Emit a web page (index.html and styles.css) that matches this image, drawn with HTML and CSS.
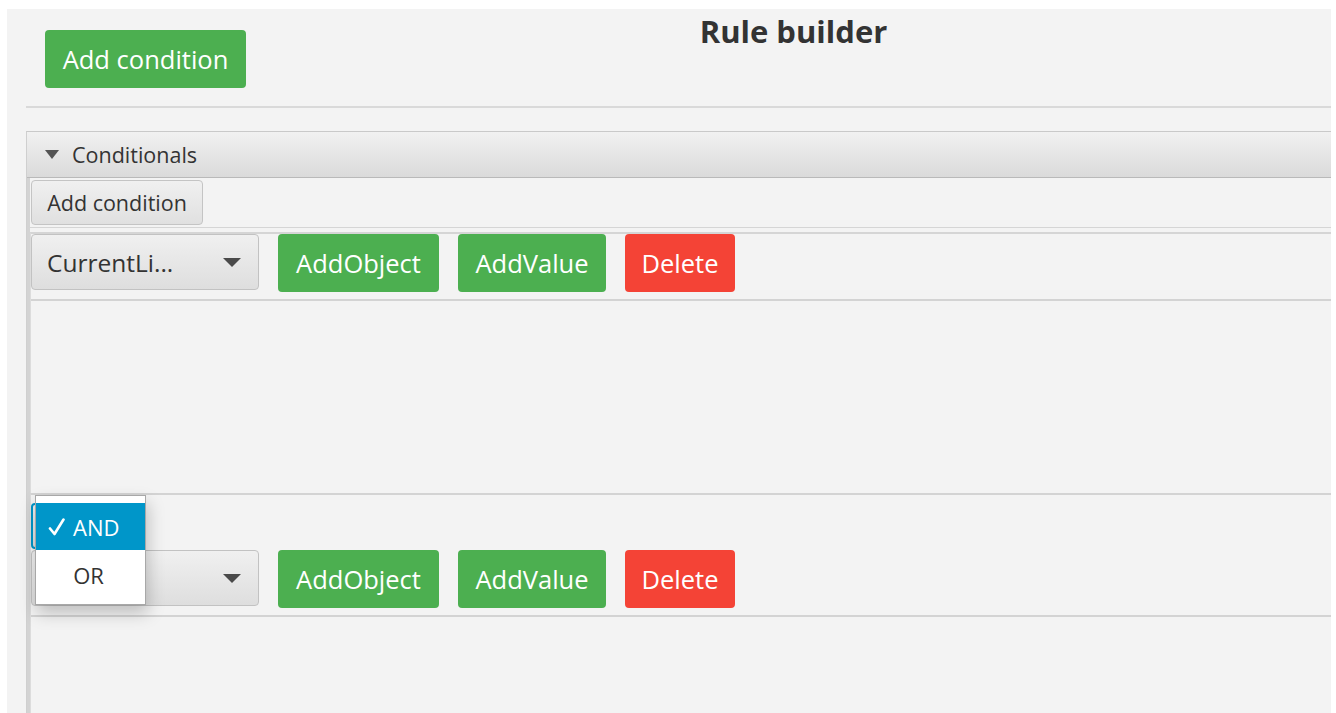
FILE: index.html
```html
<!DOCTYPE html>
<html lang="en">
<head>
<meta charset="utf-8">
<title>Rule builder</title>
<link rel="stylesheet" href="styles.css">
</head>
<body>
<div class="app">
  <header class="topbar">
    <button class="btn btn-green btn-top">Add condition</button>
    <h1 class="title">Rule builder</h1>
  </header>
  <div class="divider"></div>

  <section class="pane">
    <div class="pane-header">
      <svg class="pane-arrow" width="14" height="10" viewBox="0 0 14 10"><path d="M0 0 L14 0 L7 9 Z" fill="#545454"/></svg>
      <span>Conditionals</span>
    </div>
    <div class="pane-content">
      <div class="toolbar">
        <button class="btn btn-plain">Add condition</button>
      </div>

      <div class="cond cond-first">
        <div class="cond-row">
          <div class="combo">
            <span class="combo-text">CurrentLi...</span>
            <svg class="combo-arrow" width="18" height="10" viewBox="0 0 18 10"><path d="M0 0 L18 0 L9 9 Z" fill="#4a4a4a"/></svg>
          </div>
          <button class="btn btn-green btn-obj">AddObject</button>
          <button class="btn btn-green btn-val">AddValue</button>
          <button class="btn btn-red btn-del">Delete</button>
        </div>
        <div class="cond-body"></div>
      </div>

      <div class="connector">
        <div class="combo combo-small focused"></div>
        <ul class="popup">
          <li class="popup-item selected">
            <svg class="check" width="18" height="18" viewBox="0 0 18 18"><path d="M2 10.5 L6.5 16 L15.5 1.5" fill="none" stroke="#fff" stroke-width="2.6" stroke-linecap="round" stroke-linejoin="round"/></svg>
            AND
          </li>
          <li class="popup-item">OR</li>
        </ul>
      </div>

      <div class="cond">
        <div class="cond-row cond-row-2">
          <div class="combo">
            <span class="combo-text"></span>
            <svg class="combo-arrow" width="18" height="10" viewBox="0 0 18 10"><path d="M0 0 L18 0 L9 9 Z" fill="#4a4a4a"/></svg>
          </div>
          <button class="btn btn-green btn-obj">AddObject</button>
          <button class="btn btn-green btn-val">AddValue</button>
          <button class="btn btn-red btn-del">Delete</button>
        </div>
        <div class="cond-body"></div>
      </div>
    </div>
  </section>
</div>
</body>
</html>
```
FILE: styles.css
```css
* {
  box-sizing: border-box;
}

html, body {
  margin: 0;
  padding: 0;
  background: #ffffff;
  height: 100%;
  overflow: hidden;
}

body {
  font-family: "Open Sans", "Noto Sans", sans-serif;
  color: #333333;
}

.app {
  margin: 9px 5px 0 7px;
  height: calc(100% - 9px);
  background: #f3f3f3;
  overflow: hidden;
}

/* top bar with the main action and the heading */
.topbar {
  display: flex;
  align-items: flex-start;
  height: 97px;
  padding: 21px 0 0 38px;
}

.title {
  flex: 1;
  margin: -20px 0 0 10px;
  font-size: 31px;
  line-height: 42px;
  font-weight: 700;
  text-align: center;
  color: #333333;
}

.divider {
  margin-left: 19px;
  border-top: 2px solid #d9d9d9;
}

/* buttons */
.btn {
  font-family: inherit;
  border: none;
  border-radius: 4px;
  padding: 0;
  cursor: pointer;
  display: inline-flex;
  align-items: center;
  justify-content: center;
}

.btn-green {
  background: #4caf50;
  color: #ffffff;
}

.btn-red {
  background: #f44336;
  color: #ffffff;
}

.btn-top {
  width: 201px;
  height: 58px;
  font-size: 25.5px;
}

.btn-plain {
  width: 172px;
  height: 45px;
  margin-left: 1px;
  font-size: 21.5px;
  color: #333333;
  border: 1px solid #c4c4c4;
  border-radius: 4px;
  background: linear-gradient(#f0f0f0, #e0e0e0);
}

.btn-obj,
.btn-val,
.btn-del {
  height: 58px;
  font-size: 25.5px;
}

.btn-obj { width: 161px; }
.btn-val { width: 148px; }
.btn-del { width: 110px; }

/* titled pane */
.pane {
  margin: 23px 0 0 19px;
  border-top: 1px solid #c9c9c9;
  border-left: 1px solid #cfcfcf;
}

.pane-header {
  height: 46px;
  display: flex;
  align-items: center;
  padding-left: 18px;
  gap: 13px;
  font-size: 21.5px;
  color: #333333;
  background: linear-gradient(#f1f1f1, #dadada);
  border-bottom: 1px solid #b9b9b9;
}

.pane-arrow {
  margin-top: 1px;
}

.pane-content {
  border-left: 3px solid #d3d3d3;
}

.toolbar {
  padding: 2px 0 0 0;
  height: 50px;
  border-bottom: 1px solid #d5d5d5;
}

.cond {
  border-left: 1px solid #dcdcdc;
}

.cond-first {
  margin-top: 4px;
  border-top: 2px solid #d5d5d5;
}

.cond-row {
  display: flex;
  align-items: flex-start;
  gap: 19px;
  height: 67px;
  padding-top: 0;
  border-bottom: 2px solid #d3d3d3;
}

.cond-body {
  height: 192px;
}

/* combo box */
.combo {
  width: 228px;
  height: 56px;
  display: flex;
  align-items: center;
  justify-content: space-between;
  padding: 0 17px 0 15px;
  border: 1px solid #c2c2c2;
  border-radius: 4px;
  background: linear-gradient(#f0f0f0, #dedede);
  font-size: 24.5px;
  color: #333333;
}

.combo-arrow {
  margin-top: 2px;
}

.connector {
  position: relative;
  height: 57px;
  border-top: 2px solid #d3d3d3;
  border-left: 1px solid #dcdcdc;
  padding-top: 8px;
}

.combo-small {
  width: 100px;
  height: 46px;
}

.combo-small.focused {
  border-color: #0096c9;
  border-width: 2px;
}

/* dropdown list of the connector */
.popup {
  position: absolute;
  top: 0;
  left: 4px;
  width: 111px;
  margin: 0;
  padding: 7px 0 0 0;
  list-style: none;
  background: #ffffff;
  border: 1px solid #a8a8a8;
  box-shadow: 2px 8px 16px rgba(0, 0, 0, 0.22);
  z-index: 2;
}

.popup-item {
  height: 47px;
  display: flex;
  align-items: center;
  justify-content: center;
  font-size: 22px;
  color: #333333;
}

.popup-item.selected {
  background: #0096c9;
  color: #ffffff;
  justify-content: flex-start;
  padding-left: 12px;
  gap: 7px;
}

.popup-item + .popup-item {
  height: 54px;
  padding: 0 4px 4px 0;
}
```
